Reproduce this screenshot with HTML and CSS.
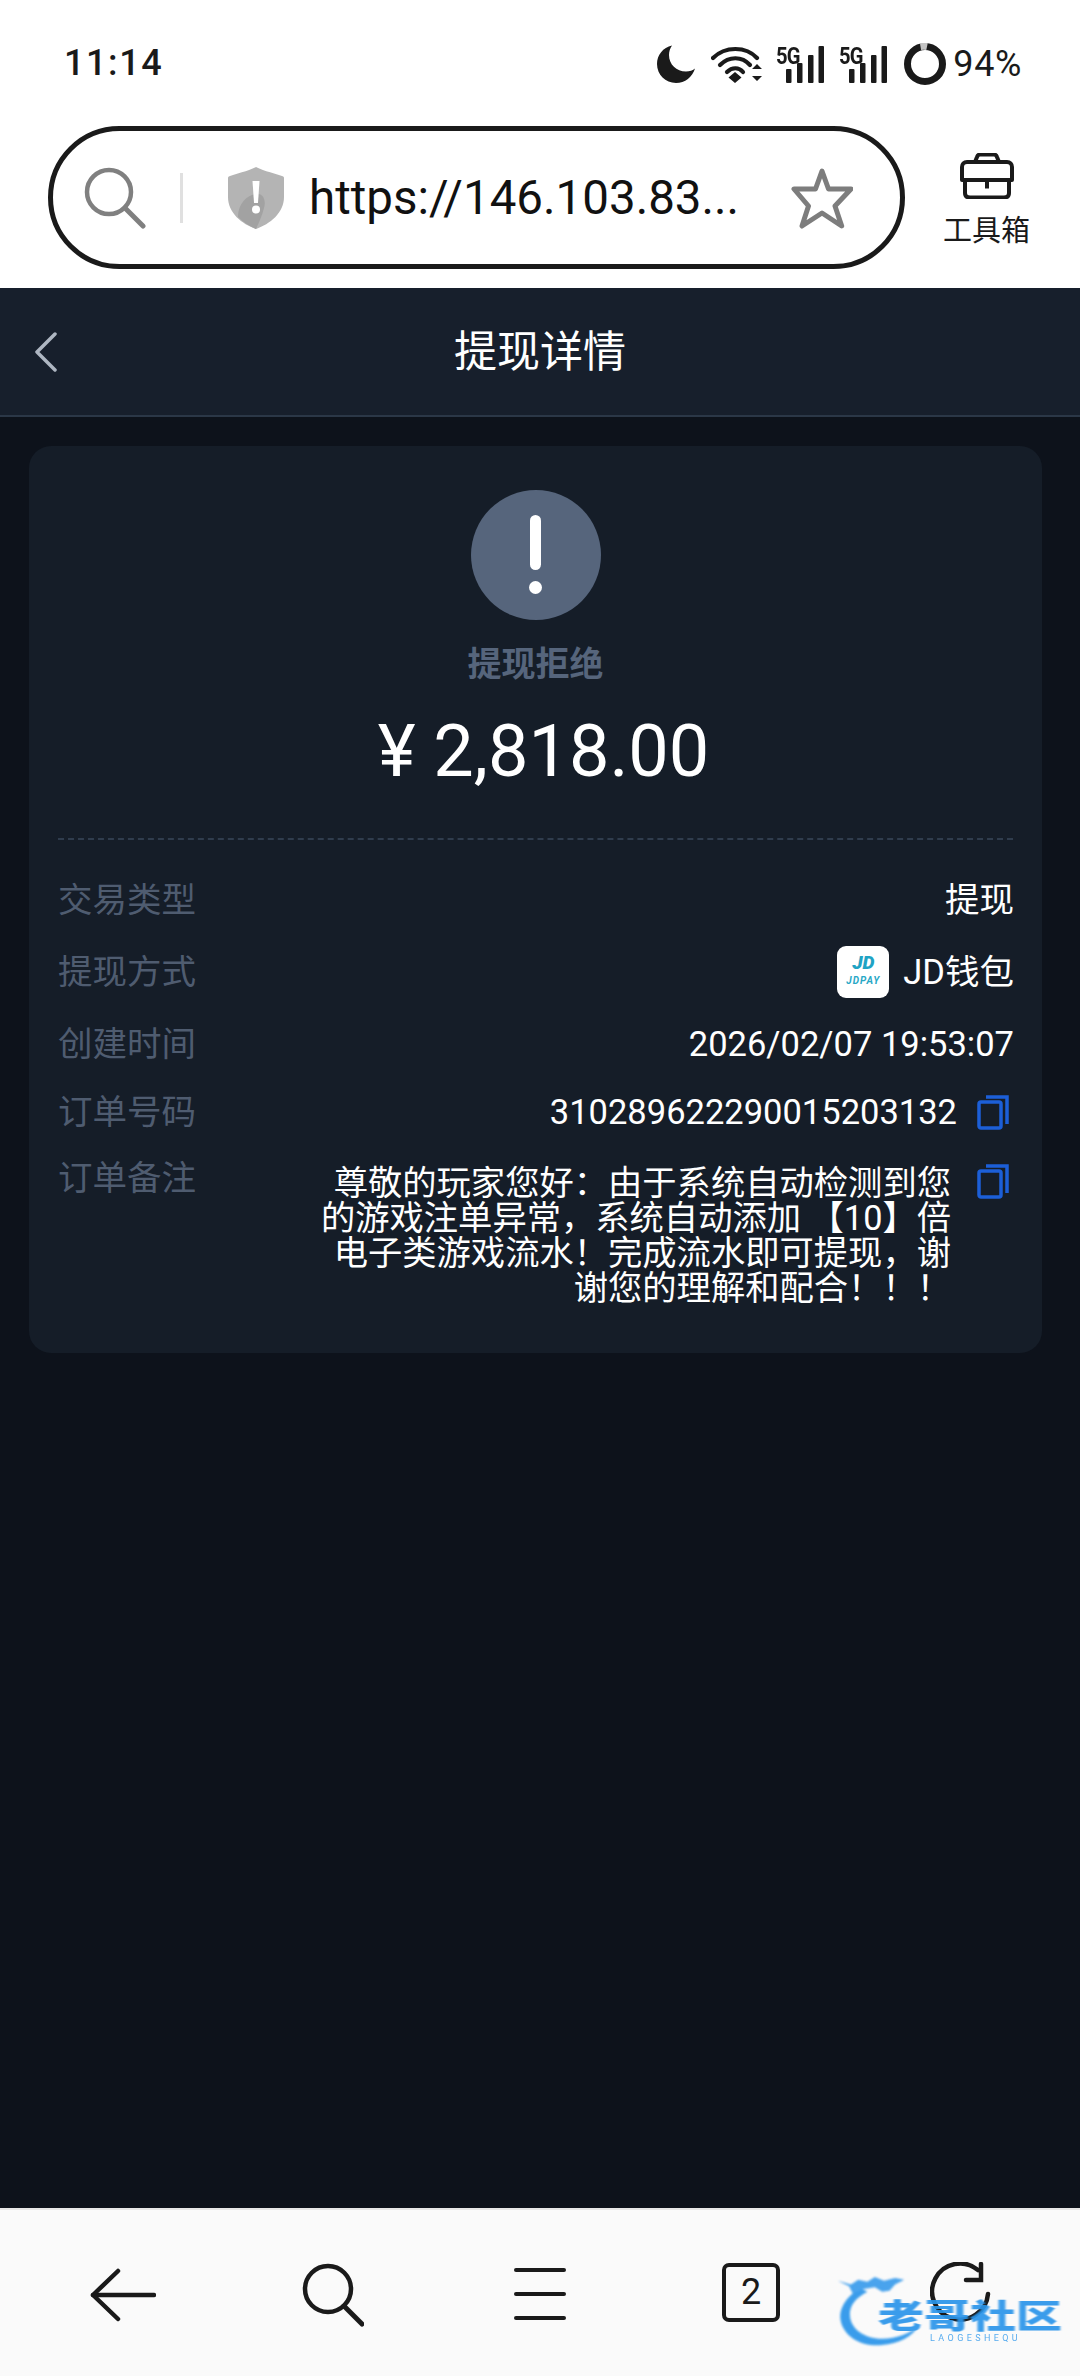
FILE: index.html
```html
<!DOCTYPE html>
<html lang="zh-CN">
<head>
<meta charset="utf-8">
<title>提现详情</title>
<link rel="stylesheet" href="styles.css">
</head>
<body>
<div class="phone">
  <div class="status">
    <span class="time">11:14</span>
    <div class="status-icons">
      <svg class="i-moon" viewBox="0 0 38 38"><path fill="#1a1a1a" d="M15 0.5C6 2.5 0 10 0 19c0 10.500 8.500 19 19 19 9 0 16.500-6 19-14.500-2 2-5.500 3-9 3C19.500 26.500 12 19.500 12 10c0-3.500 1-6.800 3-9.500z"/></svg>
      <svg class="i-wifi" viewBox="0 0 52 38"><g fill="none" stroke="#1a1a1a" stroke-width="4.200" stroke-linecap="round"><path d="M2 13C14 1 35 1 46 13"/><path d="M9 20C18 11 31 11 39 20"/><path d="M16 27C21 22 28 22 32 27"/></g><path fill="#1a1a1a" d="M24 27l6.500 5.500L24 38l-6.500-5.500zM46 19l5 5H41zM41 31h10l-5 5z"/></svg>
      <div class="sig">
        <span class="sig-5g">5G</span>
        <svg class="i-bars" viewBox="0 0 38 37"><g fill="#1a1a1a"><rect x="0" y="23" width="5.500" height="14" rx="1"/><rect x="11" y="17" width="5.500" height="20" rx="1"/><rect x="22" y="9" width="5.500" height="28" rx="1"/><rect x="32.500" y="0" width="5.500" height="37" rx="1"/></g></svg>
      </div>
      <div class="sig">
        <span class="sig-5g">5G</span>
        <svg class="i-bars" viewBox="0 0 38 37"><g fill="#1a1a1a"><rect x="0" y="23" width="5.500" height="14" rx="1"/><rect x="11" y="17" width="5.500" height="20" rx="1"/><rect x="22" y="9" width="5.500" height="28" rx="1"/><rect x="32.500" y="0" width="5.500" height="37" rx="1"/></g></svg>
      </div>
      <svg class="i-batt" viewBox="0 0 42 42"><circle cx="21" cy="21" r="17.500" fill="none" stroke="#1a1a1a" stroke-width="7"/><path d="M16.500 3.500A17.500 17.500 0 0 1 23 3.600" fill="none" stroke="#c4c4c4" stroke-width="7"/></svg>
      <span class="pct">94%</span>
    </div>
  </div>

  <div class="browser">
    <div class="pill">
      <svg class="i-search" viewBox="0 0 62 62"><circle cx="25" cy="25" r="22" fill="none" stroke="#808080" stroke-width="4.500"/><path d="M41 41L59 59" stroke="#808080" stroke-width="5" stroke-linecap="round"/></svg>
      <span class="pill-div"></span>
      <svg class="i-shield" viewBox="0 0 56 62"><path fill="#b4b4b4" d="M28 0c3 2 16 6 26 9 2 .6 2 1 2 3v18c0 16-14 27-28 32C14 57 0 46 0 30V12c0-2 0-2.400 2-3C12 6 25 2 28 0z"/><path fill="#a2a2a2" d="M10 50c0-14 10-23 20-23 6 0 8 8 6 14-2 8-5 14-8 21-7-3-13-7-18-12z"/><path fill="#fff" d="M24.500 14h7l-1.500 22h-4z"/><circle cx="28" cy="42.500" r="4" fill="#fff"/></svg>
      <span class="url">https://146.103.83...</span>
      <svg class="i-star" viewBox="0 0 62 62"><path fill="none" stroke="#7d7d7d" stroke-width="5" stroke-linejoin="round" d="M31 4l6.500 18H60L44 39l6.700 20L31 46 11 59l6.500-20L3 22h21.500z"/></svg>
    </div>
    <div class="tools">
      <svg class="i-box" viewBox="0 0 54 46"><g fill="none" stroke="#1a1a1a" stroke-width="4" stroke-linejoin="round"><path d="M2 27V14c0-3 2-5 5-5h40c3 0 5 2 5 5v13z"/><path d="M5 27v13c0 3 2 4.500 5 4.500h34c3 0 5-1.500 5-4.500V27"/><path d="M15 9l2-5c.5-1.500 1.500-2.500 3-2.500h14c1.500 0 2.500 1 3 2.500l2 5"/><path d="M27 27v8.500"/></g></svg>
      <span class="tools-label">工具箱</span>
    </div>
  </div>

  <main class="page">
    <header class="topbar">
      <svg class="i-chev" viewBox="0 0 24 40"><path d="M21 2L3 20l18 18" fill="none" stroke="#aeb6c2" stroke-width="3.500" stroke-linecap="round" stroke-linejoin="round"/></svg>
      <h1 class="top-title">提现详情</h1>
    </header>
    <section class="card">
      <div class="alert"><span class="alert-bar"></span><span class="alert-dot"></span></div>
      <div class="state">提现拒绝</div>
      <div class="amount">¥ 2,818.00</div>
      <div class="dash"></div>
      <div class="rows">
        <div class="row h48"><span class="lab">交易类型</span><span class="val">提现</span></div>
        <div class="row h52"><span class="lab">提现方式</span>
          <span class="val val-pay">
            <span class="jd"><span class="jd-mark">JD</span><span class="jd-name">JDPAY</span></span>
            <span>JD钱包</span>
          </span>
        </div>
        <div class="row h48"><span class="lab">创建时间</span><span class="val">2026/02/07 19:53:07</span></div>
        <div class="row h44"><span class="lab">订单号码</span>
          <span class="val val-copy"><span>310289622290015203132</span>
            <svg class="i-copy" viewBox="0 0 32 35"><g fill="none" stroke="#1c5fd8" stroke-width="3.500"><rect x="2" y="7" width="22" height="26" rx="2"/><path d="M9 2h21v27"/></g></svg>
          </span>
        </div>
        <div class="row row-note"><span class="lab">订单备注</span>
          <div class="note-wrap">
            <p class="note">尊敬的玩家您好：由于系统自动检测到您的游戏注单异常，系统自动添加 【10】倍电子类游戏流水！完成流水即可提现，谢谢您的理解和配合！！！</p>
            <svg class="i-copy" viewBox="0 0 32 35"><g fill="none" stroke="#1c5fd8" stroke-width="3.500"><rect x="2" y="7" width="22" height="26" rx="2"/><path d="M9 2h21v27"/></g></svg>
          </div>
        </div>
      </div>
    </section>
  </main>

  <nav class="nav">
    <svg class="n-back" viewBox="0 0 66 54"><g fill="none" stroke="#1a1a1a" stroke-width="4.500" stroke-linecap="round" stroke-linejoin="round"><path d="M3 27h61"/><path d="M28 3L3 27l25 24"/></g></svg>
    <svg class="n-search" viewBox="0 0 62 64"><circle cx="26" cy="26" r="23" fill="none" stroke="#1a1a1a" stroke-width="4.500"/><path d="M42 43L60 61" stroke="#1a1a1a" stroke-width="5" stroke-linecap="round"/></svg>
    <div class="n-menu"><span></span><span></span><span></span></div>
    <div class="n-tab">2</div>
    <svg class="n-ref" viewBox="0 0 62 62"><g fill="none" stroke="#1a1a1a" stroke-width="4.500" stroke-linecap="round"><path d="M58 32A28 28 0 1 1 48 8"/><path d="M51 2v16H36"/></g></svg>
    <div class="mark">
      <svg class="mark-dragon" viewBox="0 0 100 80"><path fill="#2a95ea" d="M24 14C8 24 0 38 3 50c4 17 22 28 45 26 18-2 33-9 40-22-9 9-24 15-40 15C28 69 14 58 13 44 12 33 20 24 32 18z"/><path fill="#3a9cec" d="M0 6l14 4 8-5 10 2 8-5 10 4 12-3 10 2 -10 5-6 7-8 1-8-5-12 2-12 5-4-8-10-5z"/></svg>
      <div class="mark-name">老哥社区</div>
      <div class="mark-sub">LAOGESHEQU</div>
    </div>
  </nav>
</div>
</body>
</html>
```
FILE: styles.css
```css
* { box-sizing: border-box; }
html, body { margin: 0; padding: 0; }
body {
  background: #0d121b;
  font-family: Roboto, "Noto Sans CJK SC", sans-serif;
}
.phone {
  width: 1080px;
  height: 2376px;
  display: flex;
  flex-direction: column;
  overflow: hidden;
}

/* status bar */
.status {
  height: 126px;
  flex: none;
  background: #fff;
  display: flex;
  align-items: flex-start;
  justify-content: space-between;
  padding: 43px 58px 0 64px;
}
.time {
  font-size: 36px;
  line-height: 40px;
  font-weight: 500;
  letter-spacing: 1.600px;
  color: #1a1a1a;
}
.status-icons { display: flex; align-items: center; height: 42px; }
.i-moon { width: 38px; height: 38px; margin-right: 16px; }
.i-wifi { width: 52px; height: 38px; margin-right: 13px; }
.sig { position: relative; width: 48px; height: 37px; margin-right: 15px; }
.sig-5g {
  position: absolute;
  left: 0;
  top: -2px;
  font-size: 24px;
  line-height: 24px;
  font-weight: 700;
  color: #1a1a1a;
  letter-spacing: -1px;
  transform: scaleX(.84);
  transform-origin: left center;
}
.i-bars { position: absolute; right: 0; top: 0; width: 38px; height: 37px; }
.i-batt { width: 42px; height: 42px; margin-left: 2px; margin-right: 7px; }
.pct { font-size: 36px; line-height: 42px; color: #1a1a1a; letter-spacing: .6px; }

/* browser bar */
.browser {
  height: 162px;
  flex: none;
  background: #fff;
  display: flex;
  align-items: flex-start;
  padding-left: 48px;
}
.pill {
  width: 857px;
  height: 143px;
  border: 5px solid #1a1a1a;
  border-radius: 72px;
  display: flex;
  align-items: center;
  padding-left: 31px;
}
.i-search { width: 62px; height: 62px; flex: none; }
.pill-div { width: 3px; height: 50px; background: #e0e0e0; margin-left: 34px; flex: none; }
.i-shield { width: 56px; height: 62px; margin-left: 45px; flex: none; }
.url {
  font-size: 47.500px;
  line-height: 60px;
  color: #111;
  margin-left: 25px;
  width: 482px;
  white-space: nowrap;
  flex: none;
}
.i-star { width: 62px; height: 62px; flex: none; }
.tools {
  flex: 1;
  display: flex;
  flex-direction: column;
  align-items: center;
  padding: 27px 12px 0 0;
}
.i-box { width: 54px; height: 46px; }
.tools-label { font-size: 29px; line-height: 40px; color: #1a1a1a; margin-top: 12px; }

/* page */
.page { flex: 1; min-height: 0; background: #0d121b; }
.topbar {
  height: 129px;
  background: #171f2c;
  border-bottom: 2px solid #2b3747;
  display: flex;
  align-items: center;
  justify-content: center;
  position: relative;
}
.i-chev { position: absolute; left: 34px; top: 44px; width: 24px; height: 40px; }
.top-title { margin: 0; font-size: 43px; line-height: 60px; font-weight: 400; color: #fff; }

.card {
  margin: 29px 38px 0 29px;
  height: 907px;
  background: #151d28;
  border-radius: 22px;
  padding: 44px 29px 0;
  display: flex;
  flex-direction: column;
}
.alert {
  width: 130px;
  height: 130px;
  border-radius: 50%;
  background: #56657c;
  align-self: center;
  display: flex;
  flex-direction: column;
  align-items: center;
  padding-top: 25px;
}
.alert-bar { width: 11px; height: 55px; border-radius: 6px; background: #fff; }
.alert-dot { width: 13px; height: 13px; border-radius: 50%; background: #fff; margin-top: 11px; }
.state {
  margin-top: 22px;
  text-align: center;
  font-size: 34px;
  line-height: 44px;
  font-weight: 700;
  color: #56657c;
}
.amount {
  margin-top: 24px;
  padding-left: 16px;
  text-align: center;
  font-size: 72px;
  line-height: 84px;
  color: #fff;
}
.dash { margin-top: 44px; border-top: 2px dashed #2f3c4d; }
.rows { margin: 36px -1px 0 0; display: flex; flex-direction: column; gap: 22px; }
.row { display: flex; justify-content: space-between; align-items: center; }
.h48 { height: 48px; }
.h52 { height: 52px; }
.h44 { height: 44px; }
.lab { font-size: 34.500px; line-height: 44px; color: #4f5c70; }
.val { font-size: 34.500px; line-height: 44px; color: #fff; }
.val-pay { display: flex; align-items: center; gap: 14px; }
.jd {
  width: 52px;
  height: 52px;
  border-radius: 9px;
  background: #fff;
  display: flex;
  flex-direction: column;
  align-items: center;
  padding-top: 8px;
}
.jd-mark {
  font-size: 19px;
  line-height: 18px;
  font-weight: 900;
  font-style: italic;
  color: #1fa3c4;
}
.jd-name {
  font-size: 10px;
  line-height: 12px;
  margin-top: 3px;
  font-weight: 700;
  font-style: italic;
  letter-spacing: 1px;
  color: #28a8c6;
}
.val-copy { display: flex; align-items: center; gap: 20px; padding-right: 5px; }
.i-copy { width: 32px; height: 35px; flex: none; }
.row-note { align-items: flex-start; }
.note-wrap { display: flex; align-items: flex-start; gap: 26px; padding-right: 5px; padding-top: 8px; }
.note {
  margin: 2px 0 0;
  width: 640px;
  text-align: right;
  font-size: 34.300px;
  line-height: 35px;
  color: #fff;
}

/* bottom nav */
.nav {
  height: 168px;
  flex: none;
  background: #fafafa;
  border-top: 2px solid #e8e8e8;
  position: relative;
  display: flex;
  align-items: flex-start;
  padding: 56px 0 0 90px;
}
.n-back { width: 66px; height: 54px; margin-top: 2px; flex: none; }
.n-search { width: 62px; height: 64px; margin-left: 146px; margin-top: -3px; flex: none; }
.n-menu {
  width: 52px;
  margin-left: 150px;
  margin-top: 2px;
  flex: none;
  display: flex;
  flex-direction: column;
  gap: 20px;
}
.n-menu span { display: block; height: 4px; border-radius: 2px; background: #1a1a1a; }
.n-tab {
  width: 58px;
  height: 59px;
  margin-left: 156px;
  margin-top: -3px;
  flex: none;
  border: 4px solid #1a1a1a;
  border-radius: 7px;
  text-align: center;
  font-size: 36px;
  line-height: 51px;
  color: #1a1a1a;
}
.n-ref { width: 62px; height: 62px; margin-left: 150px; margin-top: -4px; flex: none; }
.mark { position: absolute; left: 838px; top: 62px; width: 224px; height: 82px; opacity: .92; }
.mark-dragon { position: absolute; left: 0; top: 2px; width: 92px; height: 76px; filter: blur(1px); }
.mark-name {
  position: absolute;
  left: 40px;
  top: 19px;
  width: 184px;
  font-size: 46px;
  line-height: 50px;
  font-weight: 900;
  color: #2a95ea;
  white-space: nowrap;
  transform: scaleY(.72);
  filter: blur(.8px);
}
.mark-sub {
  position: absolute;
  left: 92px;
  top: 61px;
  font-size: 9px;
  line-height: 10px;
  letter-spacing: 3.400px;
  color: #4aa5ee;
}
```
